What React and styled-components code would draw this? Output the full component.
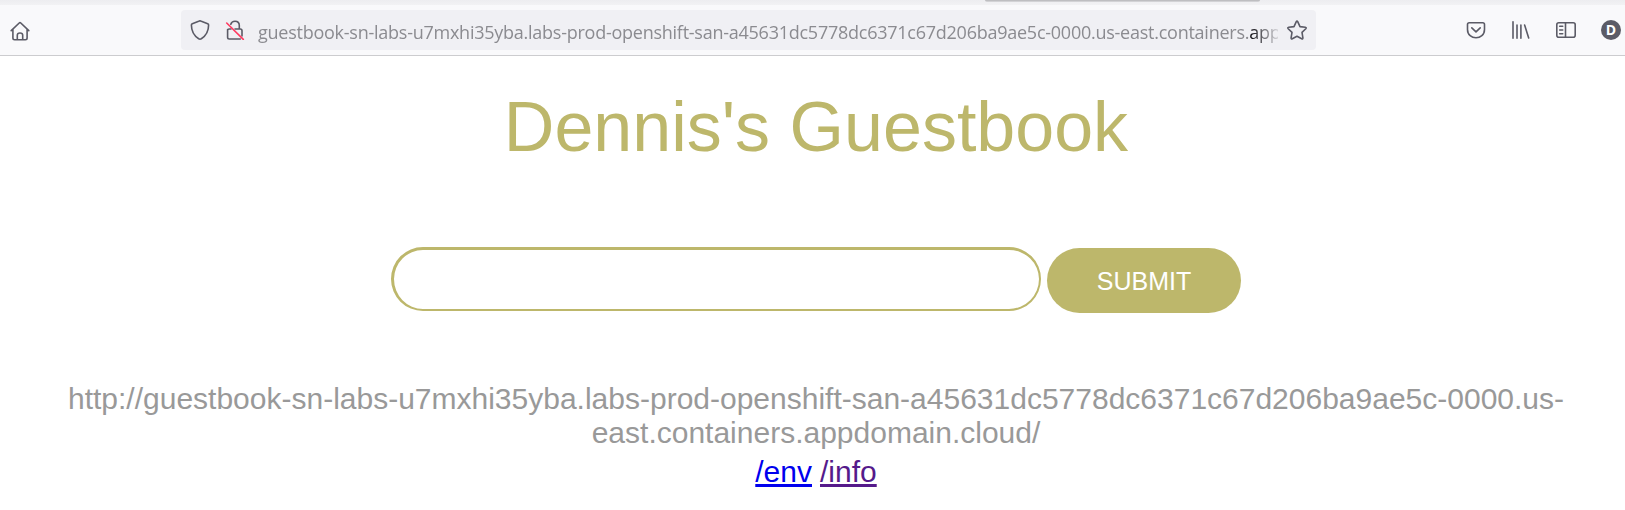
import React from "react";
import styled, { createGlobalStyle } from "styled-components";

const Global = createGlobalStyle`
  * { box-sizing: border-box; }
  body { margin: 0; background: #fff; overflow: hidden; font-family: "Liberation Sans", Arial, sans-serif; }
`;

const Window = styled.div`
  width: 1625px;
  height: 510px;
  overflow: hidden;
`;

const TabStrip = styled.div`
  height: 5px;
  padding-left: 985px;
  background: linear-gradient(#ededf0, #f2f2f4);
`;

const TabEdge = styled.div`
  width: 275px;
  height: 2px;
  background: linear-gradient(#b4b4b7, #dcdcdf);
  border-radius: 0 0 4px 4px;
`;

const Toolbar = styled.header`
  display: flex;
  align-items: center;
  height: 51px;
  padding: 0 4px 0 10px;
  background: #f9f9fb;
  border-bottom: 1px solid #cccccf;
`;

const Icon = styled.svg`
  display: block;
  flex: none;
  width: 20px;
  height: 20px;
  fill: none;
  stroke: #5b5b66;
  stroke-width: 1.6;
  stroke-linecap: round;
  stroke-linejoin: round;
`;

const HomeIcon = styled(Icon)`
  margin-top: 1px;
`;

const AddressBar = styled.div`
  display: flex;
  align-items: center;
  width: 1135px;
  height: 40px;
  margin-left: 151px;
  padding: 0 9px;
  background: #f0f0f4;
  border-radius: 4px;
`;

const Address = styled.div`
  flex: none;
  width: 1020px;
  margin: 3px 9px 0 13px;
  white-space: nowrap;
  font: 400 18px/26px "Open Sans", "Noto Sans", sans-serif;
  letter-spacing: -0.25px;
  color: #8b8b90;
  mask-image: linear-gradient(to right, #000 994px, transparent 1023px);

  b { font-weight: 400; color: #15141a; }
`;

const LockIcon = styled(Icon)`
  margin-left: 15px;
`;

const Actions = styled.div`
  display: flex;
  align-items: center;
  gap: 25px;
  margin-left: auto;
`;

const Avatar = styled.div`
  width: 20px;
  height: 20px;
  border-radius: 50%;
  background: #5b5b66;
  color: #fff;
  font: 700 14px/20px "Open Sans", sans-serif;
  text-align: center;
`;

const Page = styled.main`
  display: flex;
  flex-direction: column;
  align-items: center;
  width: 1632px;
  padding-top: 31px;
`;

const Title = styled.h1`
  margin: 0;
  font-size: 70px;
  line-height: 80px;
  font-weight: 400;
  color: #bdb76b;
`;

const Form = styled.form`
  display: flex;
  gap: 6px;
  margin-top: 80px;
`;

const Entry = styled.input`
  width: 650px;
  height: 64px;
  padding: 0 30px;
  border: solid #bdb76b;
  border-width: 3px 2px 2px 3px;
  border-radius: 32px;
  background: #fff;
  font-size: 25px;
  outline: none;
`;

const Submit = styled.button`
  width: 194px;
  height: 65px;
  margin-top: 1px;
  padding: 2px 0 0;
  border: 0;
  border-radius: 33px;
  background: #bdb76b;
  color: #fff;
  font: 25px "Liberation Sans", Arial, sans-serif;
`;

const HostInfo = styled.p`
  width: 1560px;
  margin: 69px 0 0;
  font-size: 30px;
  line-height: 34px;
  text-align: center;
  color: #999;
`;

const Links = styled.nav`
  display: flex;
  gap: 8px;
  margin-top: 5px;
  font-size: 30px;
  line-height: 34px;
`;

const PageLink = styled.a`
  color: ${(p) => (p.$visited ? "#551a8b" : "#0000ee")};
  text-decoration: underline;
`;

export default function App() {
  return (
    <Window>
      <Global />
      <TabStrip><TabEdge /></TabStrip>
      <Toolbar>
        <HomeIcon viewBox="0 0 20 20">
          <path d="M1.2 9.700 9.200 2q.8-.8 1.600 0l8 7.700M2.900 8.500v8.500q0 1.700 1.700 1.700h10.800q1.700 0 1.700-1.700V8.500M7.300 18.500v-4.300q0-2.200 2.700-2.200t2.700 2.200v4.300" />
        </HomeIcon>
        <AddressBar>
          <Icon viewBox="0 0 20 20">
            <path d="M9.300 1q.7-.3 1.400 0l7 2.700q.9.400.9 1.400c0 6-2.500 10.700-7.300 13.700q-1.300.7-2.600 0C3.900 15.800 1.400 11.100 1.400 5.100q0-1 .9-1.400Z" />
          </Icon>
          <LockIcon viewBox="0 0 20 20">
            <path d="M5.800 4.200Q6.700 1.200 10 1.200q4.300 0 4.300 4.300V9M2.600 9.500v7.800q0 1.700 1.700 1.700h11M10 9h5.300q1.700 0 1.700 1.700V16M2.600 10.500Q2.600 9 4.200 9H6" />
            <path d="M1.700 3 18.300 19.400" stroke="#ff3b61" />
          </LockIcon>
          <Address>
            guestbook-sn-labs-u7mxhi35yba.labs-prod-openshift-san-a45631dc5778dc6371c67d206ba9ae5c-0000.us-east.containers.<b>app</b>
          </Address>
          <Icon viewBox="0 0 20 20">
            <path d="M9.300 1.600q.7-1.200 1.400 0l2.300 5 5.300.7q1.500.3.500 1.400L15 12.400l.9 5.500q.1 1.400-1.200.8L10 16.200l-4.700 2.500q-1.300.6-1.200-.8l.9-5.500L1.200 8.700Q.2 7.600 1.700 7.300L7 6.600Z" />
          </Icon>
        </AddressBar>
        <Actions>
          <Icon viewBox="0 0 20 20">
            <path d="M3.200 2.800h13.600q1.700 0 1.700 1.700v5c0 11-17 11-17 0v-5q0-1.700 1.700-1.700ZM5.800 7.800 10 11.800l4.200-4" />
          </Icon>
          <Icon viewBox="0 0 20 20">
            <path d="M2 1.800v16.400M6 5v13.200M9.900 5v13.200M13.600 5 17.700 18" />
          </Icon>
          <Icon viewBox="0 0 20 20">
            <rect x=".8" y="2.800" width="18.400" height="14.400" rx="2" />
            <path d="M9.500 3v14M3.700 6.300h3M3.700 10h3M3.700 13.700h3" />
          </Icon>
          <Avatar>D</Avatar>
        </Actions>
      </Toolbar>
      <Page>
        <Title>Dennis's Guestbook</Title>
        <Form>
          <Entry />
          <Submit type="button">SUBMIT</Submit>
        </Form>
        <HostInfo>
          http://guestbook-sn-labs-u7mxhi35yba.labs-prod-openshift-san-a45631dc5778dc6371c67d206ba9ae5c-0000.us-<wbr />east.containers.appdomain.cloud/
        </HostInfo>
        <Links>
          <PageLink href="#env">/env</PageLink>
          <PageLink href="#info" $visited>/info</PageLink>
        </Links>
      </Page>
    </Window>
  );
}
